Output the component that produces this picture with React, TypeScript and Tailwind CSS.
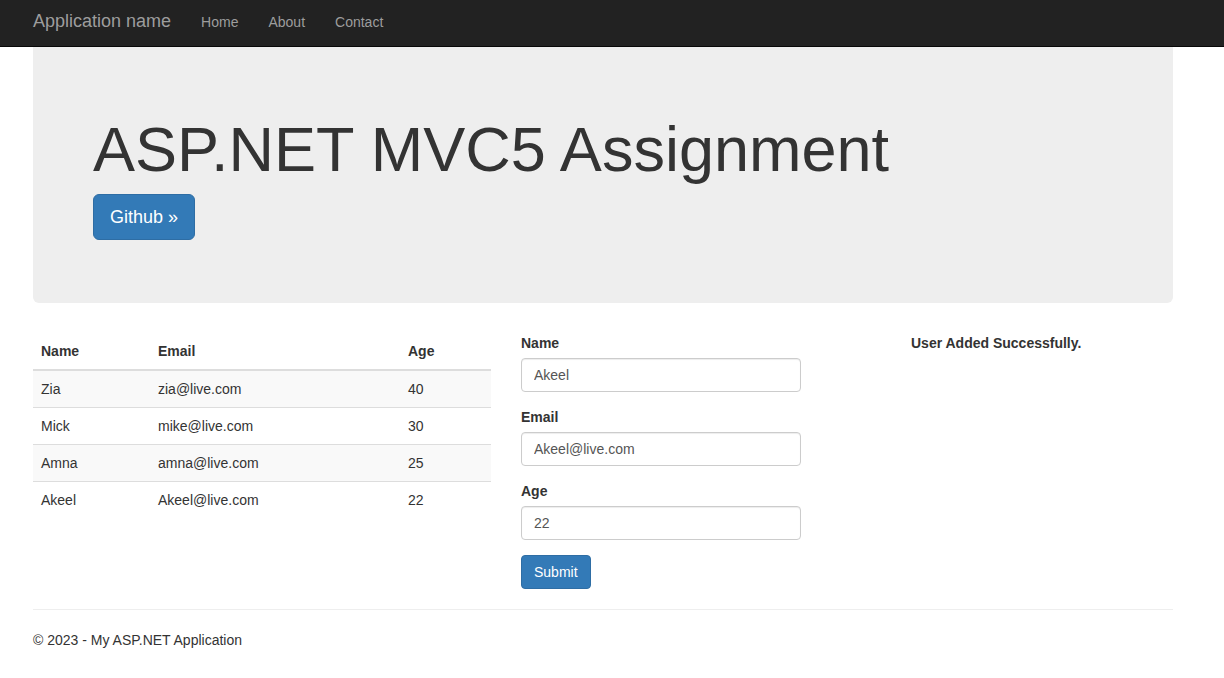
import React from "react";

type User = { name: string; email: string; age: number };

const users: User[] = [
  { name: "Zia", email: "zia@live.com", age: 40 },
  { name: "Mick", email: "mike@live.com", age: 30 },
  { name: "Amna", email: "amna@live.com", age: 25 },
  { name: "Akeel", email: "Akeel@live.com", age: 22 },
];

const Navbar = () => (
  <nav className="h-[47px] bg-[#222] border-b border-[#080808]">
    <div className="mx-[33px] flex items-start pt-[11px] leading-[20px]">
      <a className="text-[18px] text-[#9d9d9d] mr-[15px]">Application name</a>
      <ul className="flex pt-[1px] text-[14px] text-[#9d9d9d]">
        <li className="px-[15px]">Home</li>
        <li className="px-[15px]">About</li>
        <li className="px-[15px]">Contact</li>
      </ul>
    </div>
  </nav>
);

const Field = ({ label, value }: { label: string; value: string }) => (
  <div className="mb-[15px]">
    <label className="block font-bold text-[14px] leading-[20px] mb-[5px]">{label}</label>
    <input
      readOnly
      value={value}
      className="block w-[280px] h-[34px] px-[12px] py-[6px] text-[14px] text-[#555] bg-white border border-[#ccc] rounded-[4px] shadow-[inset_0_1px_1px_rgba(0,0,0,0.075)] outline-none"
    />
  </div>
);

export default function App() {
  return (
    <div className="min-h-[678px] bg-white text-[#333] text-[14px] leading-[20px] font-['Liberation_Sans',Arial,sans-serif]">
      <Navbar />
      <div className="mx-[33px] w-[1140px]">
        <div className="bg-[#eee] rounded-b-[6px] px-[60px] pt-[48px] pb-[48px] mb-[30px]">
          <h1 className="mt-[20px] mb-[10px] text-[63px] leading-[1.1] font-normal">ASP.NET MVC5 Assignment</h1>
          <p className="mb-[15px]">
            <a className="inline-block h-[46px] px-[16px] py-[10px] text-[18px] leading-[24px] text-white bg-[#337ab7] border border-[#2e6da4] rounded-[6px]">
              Github &raquo;
            </a>
          </p>
        </div>

        <div className="flex">
          <div className="w-[458px] mr-[30px]">
            <table className="w-full border-collapse">
              <thead>
                <tr className="text-left">
                  <th className="w-[117px] p-[8px] border-b-2 border-[#ddd]">Name</th>
                  <th className="w-[250px] p-[8px] border-b-2 border-[#ddd]">Email</th>
                  <th className="p-[8px] border-b-2 border-[#ddd]">Age</th>
                </tr>
              </thead>
              <tbody>
                {users.map((u, i) => (
                  <tr key={u.name} className={i % 2 === 0 ? "bg-[#f9f9f9]" : "bg-white"}>
                    <td className={`p-[8px] ${i > 0 ? "border-t border-[#ddd]" : ""}`}>{u.name}</td>
                    <td className={`p-[8px] ${i > 0 ? "border-t border-[#ddd]" : ""}`}>{u.email}</td>
                    <td className={`p-[8px] ${i > 0 ? "border-t border-[#ddd]" : ""}`}>{u.age}</td>
                  </tr>
                ))}
              </tbody>
            </table>
          </div>

          <div className="w-[360px] mr-[30px]">
            <Field label="Name" value="Akeel" />
            <Field label="Email" value="Akeel@live.com" />
            <Field label="Age" value="22" />
            <button className="h-[34px] px-[12px] py-[6px] text-[14px] leading-[20px] text-white bg-[#337ab7] border border-[#2e6da4] rounded-[4px]">
              Submit
            </button>
          </div>

          <div className="flex-1">
            <b className="block">User Added Successfully.</b>
          </div>
        </div>

        <hr className="mt-[20px] mb-[20px] border-0 border-t border-[#eee]" />
        <footer>
          <p>&copy; 2023 - My ASP.NET Application</p>
        </footer>
      </div>
    </div>
  );
}
